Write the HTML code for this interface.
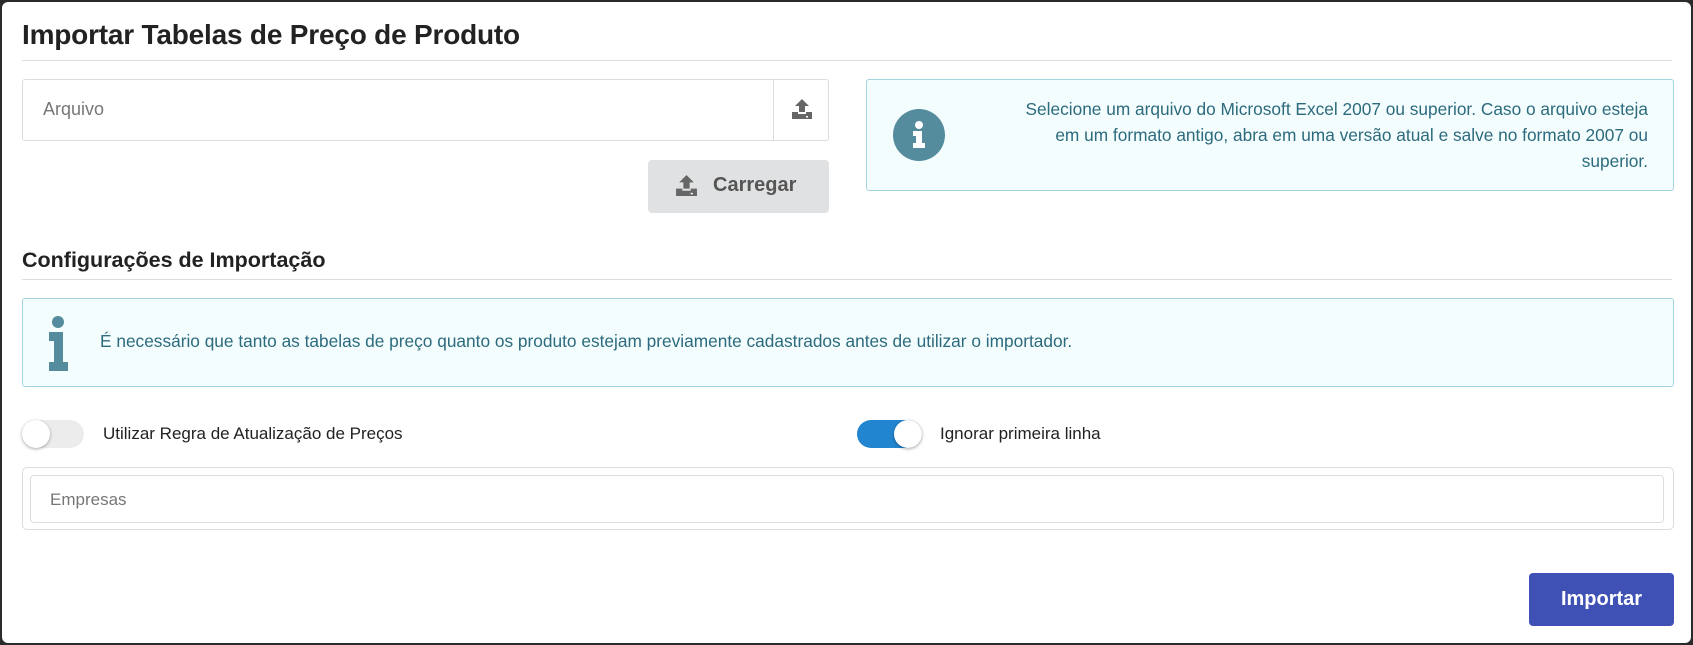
<!DOCTYPE html>
<html><head><meta charset="utf-8"><style>
*{box-sizing:border-box;margin:0;padding:0}
html,body{width:1693px;height:645px;overflow:hidden;background:#2b2b2b;font-family:"Liberation Sans",Arial,sans-serif}
.panel{position:absolute;left:2px;top:2px;width:1689px;height:641px;background:#fff;border-radius:6px}
.a{position:absolute}
h1{position:absolute;left:22px;top:19px;font-size:28px;font-weight:bold;color:#222;letter-spacing:-0.2px}
.hr{position:absolute;height:1px;background:#ddd}
.info{position:absolute;background:#f4fdfe;border:1px solid #a3d5df;border-radius:3px;color:#2c6a7d;font-size:17px}
.tg{position:absolute;height:28px;border-radius:14px}
.knob{position:absolute;top:0;width:28px;height:28px;border-radius:50%;background:#fff;box-shadow:0 1px 3px rgba(0,0,0,.35)}
.lbl{position:absolute;font-size:17px;color:#222}
</style></head><body>
<div class="panel"></div>
<h1>Importar Tabelas de Preço de Produto</h1>
<div class="hr" style="left:22px;top:60px;width:1650px"></div>

<div class="a" style="left:22px;top:79px;width:807px;height:62px;border:1px solid #ddd;border-radius:3px"></div>
<div class="a" style="left:773px;top:79px;width:1px;height:62px;background:#ddd"></div>
<div class="a" style="left:43px;top:99px;font-size:18px;color:#777">Arquivo</div>
<svg class="a" style="left:791px;top:98px" width="22" height="22" viewBox="0 0 22 22"><path d="M11 1 L4 8 H8 V14 H14 V8 H18 Z" fill="#666"/><path d="M1 14 H7 V16 H15 V14 H21 V21 H1 Z" fill="#666"/><rect x="15" y="18" width="2" height="1.5" fill="#fff"/></svg>

<div class="a" style="left:648px;top:160px;width:181px;height:53px;background:#e0e1e2;border-radius:4px"></div>
<svg class="a" style="left:675px;top:174px" width="23" height="23" viewBox="0 0 22 22"><path d="M11 1 L4 8 H8 V14 H14 V8 H18 Z" fill="#666"/><path d="M1 14 H7 V16 H15 V14 H21 V21 H1 Z" fill="#666"/><rect x="15" y="18" width="2" height="1.5" fill="#fff"/></svg>
<div class="a" style="left:713px;top:174px;font-size:20px;font-weight:bold;color:#555">Carregar</div>

<div class="info" style="left:866px;top:79px;width:808px;height:112px"></div>
<div class="a" style="left:893px;top:109px;width:52px;height:52px;border-radius:50%;background:#548c9e"></div>
<svg class="a" style="left:910px;top:120px" width="18" height="30" viewBox="0 0 18 30"><circle cx="9" cy="5" r="4" fill="#fff"/><path d="M3 11 H12 V23 H15 V28 H3 V23 H6 V16 H3 Z" fill="#fff"/></svg>
<div class="a" style="left:1008px;top:96px;width:640px;text-align:right;font-size:17.3px;line-height:26px;color:#2c6a7d">Selecione um arquivo do Microsoft Excel 2007 ou superior. Caso o arquivo esteja em um formato antigo, abra em uma versão atual e salve no formato 2007 ou superior.</div>

<div class="a" style="left:22px;top:248px;font-size:21.5px;font-weight:bold;color:#222">Configurações de Importação</div>
<div class="hr" style="left:22px;top:279px;width:1650px"></div>

<div class="info" style="left:22px;top:298px;width:1652px;height:89px"></div>
<svg class="a" style="left:48px;top:316px" width="22" height="55" viewBox="0 0 22 55"><circle cx="10" cy="6" r="6" fill="#548c9e"/><path d="M1 16 H15 V46 H20 V55 H1 V46 H6 V25 H1 Z" fill="#548c9e"/></svg>
<div class="a" style="left:100px;top:331px;font-size:17.3px;color:#2c6a7d">É necessário que tanto as tabelas de preço quanto os produto estejam previamente cadastrados antes de utilizar o importador.</div>

<div class="tg" style="left:22px;top:420px;width:62px;background:#ececec"><div class="knob" style="left:0"></div></div>
<div class="lbl" style="left:103px;top:424px">Utilizar Regra de Atualização de Preços</div>
<div class="tg" style="left:857px;top:420px;width:65px;background:#2285d0"><div class="knob" style="left:37px"></div></div>
<div class="lbl" style="left:940px;top:424px">Ignorar primeira linha</div>

<div class="a" style="left:22px;top:467px;width:1652px;height:63px;border:1px solid #ddd;border-radius:5px"></div>
<div class="a" style="left:30px;top:475px;width:1634px;height:48px;border:1px solid #ddd;border-radius:4px"></div>
<div class="a" style="left:50px;top:490px;font-size:17px;color:#777">Empresas</div>

<div class="a" style="left:1529px;top:573px;width:145px;height:53px;background:#4051b5;border-radius:4px;color:#fff;font-weight:bold;font-size:20px;text-align:center;line-height:53px">Importar</div>
</body></html>
